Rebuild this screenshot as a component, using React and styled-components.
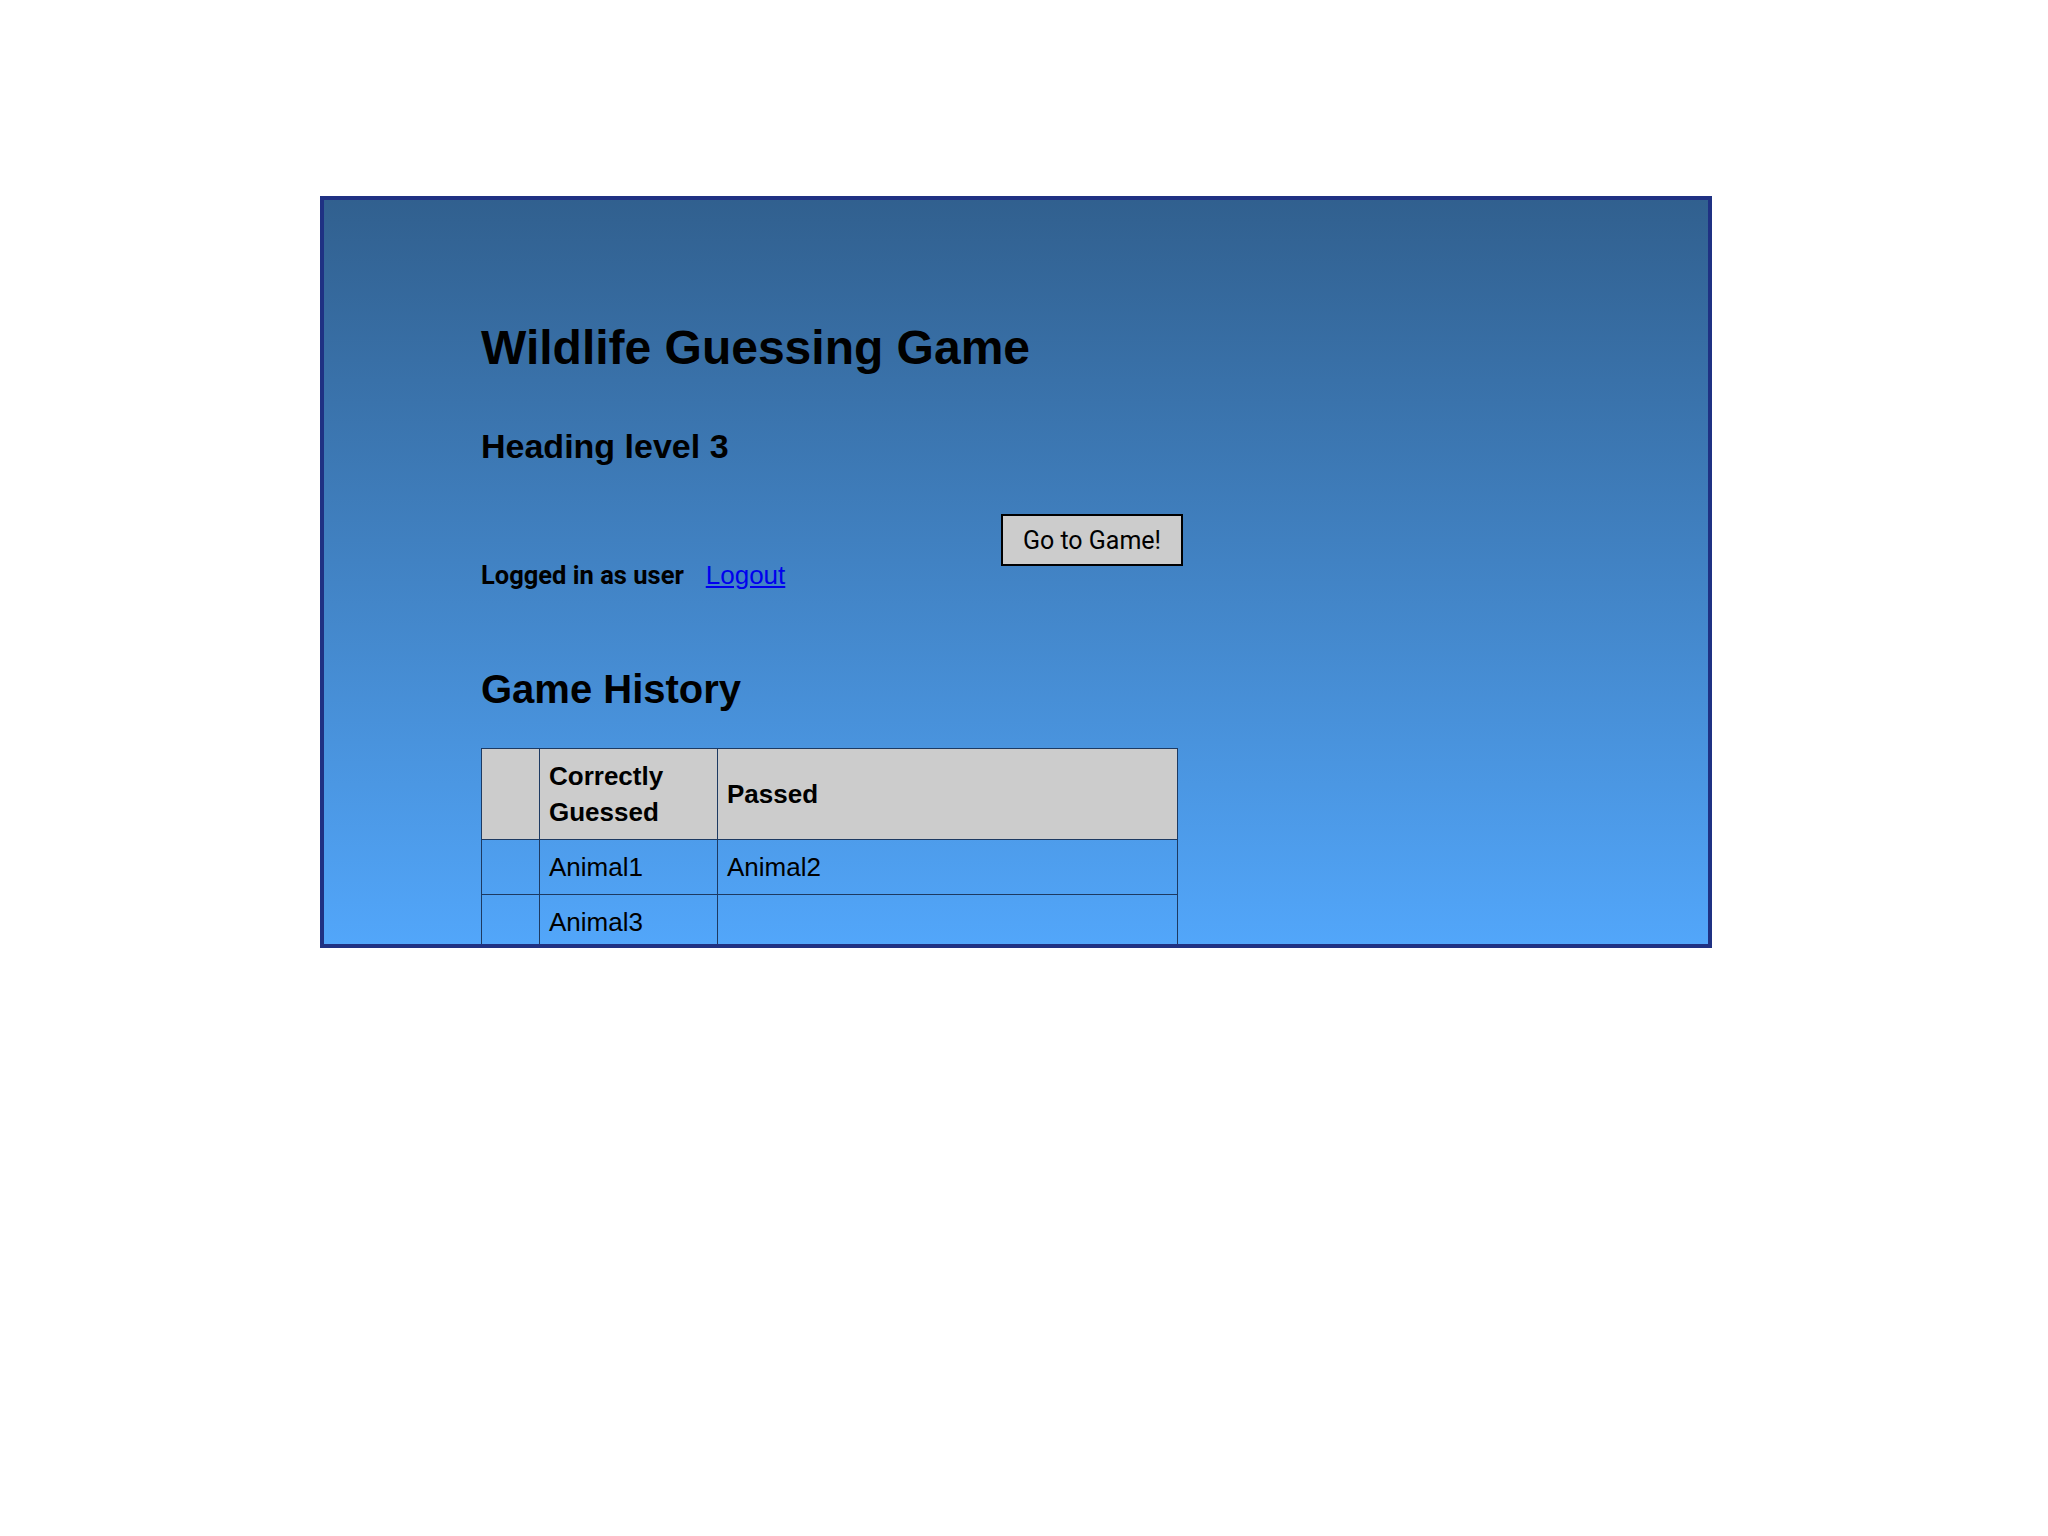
import React from "react";
import styled, { createGlobalStyle } from "styled-components";

const GlobalStyle = createGlobalStyle`
  html, body {
    margin: 0;
    padding: 0;
    background: #ffffff;
  }
  body {
    font-family: "Liberation Sans", Arial, sans-serif;
  }
`;

const Page = styled.div`
  padding: 196px 0 0 320px;
`;

const Panel = styled.main`
  box-sizing: border-box;
  width: 1392px;
  height: 752px;
  border: 4px solid #1f3183;
  background: linear-gradient(to bottom, #31608f 0%, #52a6fa 100%);
  overflow: hidden;
  padding: 120px 0 0 157px;
`;

const Title = styled.h1`
  margin: 0;
  font: 700 48px/1.15 "Liberation Sans", Arial, sans-serif;
  color: #000;
`;

const Subtitle = styled.h3`
  margin: 52px 0 0;
  font: 700 34px/1.15 "Liberation Sans", Arial, sans-serif;
  color: #000;
`;

const UserBar = styled.div`
  margin-top: 48px;
  width: 702px;
  display: flex;
  justify-content: space-between;
  align-items: flex-end;
`;

const Status = styled.div`
  display: flex;
  align-items: baseline;
  gap: 22px;
  line-height: 1;
`;

const LoggedText = styled.span`
  font: 700 25.5px/1 Roboto, "Liberation Sans", sans-serif;
  color: #000;
`;

const LogoutLink = styled.a`
  font: 400 26px/1 "Liberation Sans", Arial, sans-serif;
  color: #0000ee;
  text-decoration: underline;
`;

const GameButton = styled.button`
  box-sizing: border-box;
  width: 182px;
  height: 52px;
  margin-bottom: 22px;
  padding: 0;
  border: 2px solid #000;
  background: #cccccc;
  color: #000;
  font: 400 25px/1 Roboto, "Liberation Sans", sans-serif;
  cursor: pointer;
`;

const SectionTitle = styled.h2`
  margin: 78px 0 0;
  font: 700 40px/1.15 "Liberation Sans", Arial, sans-serif;
  color: #000;
`;

const HistoryTable = styled.table`
  margin-top: 36px;
  width: 696px;
  table-layout: fixed;
  border-collapse: collapse;
  font: 400 26px/36px "Liberation Sans", Arial, sans-serif;
  color: #000;
`;

const HeadCell = styled.th`
  background: #cccccc;
  border: 1px solid #1d3a62;
  padding: 9px 9px;
  text-align: left;
  vertical-align: middle;
  font-weight: 700;
`;

const Cell = styled.td`
  border: 1px solid #1d3a62;
  padding: 9px 9px;
  text-align: left;
  vertical-align: middle;
`;

const rows = [
  ["", "Animal1", "Animal2"],
  ["", "Animal3", ""],
];

export default function App() {
  return (
    <>
      <GlobalStyle />
      <Page>
        <Panel>
          <Title>Wildlife Guessing Game</Title>
          <Subtitle>Heading level 3</Subtitle>
          <UserBar>
            <Status>
              <LoggedText>Logged in as user</LoggedText>
              <LogoutLink href="#">Logout</LogoutLink>
            </Status>
            <GameButton>Go to Game!</GameButton>
          </UserBar>
          <SectionTitle>Game History</SectionTitle>
          <HistoryTable>
            <colgroup>
              <col style={{ width: 58 }} />
              <col style={{ width: 178 }} />
              <col style={{ width: 460 }} />
            </colgroup>
            <thead>
              <tr>
                <HeadCell></HeadCell>
                <HeadCell>Correctly Guessed</HeadCell>
                <HeadCell>Passed</HeadCell>
              </tr>
            </thead>
            <tbody>
              {rows.map((r, i) => (
                <tr key={i}>
                  {r.map((c, j) => (
                    <Cell key={j}>{c}</Cell>
                  ))}
                </tr>
              ))}
            </tbody>
          </HistoryTable>
        </Panel>
      </Page>
    </>
  );
}
